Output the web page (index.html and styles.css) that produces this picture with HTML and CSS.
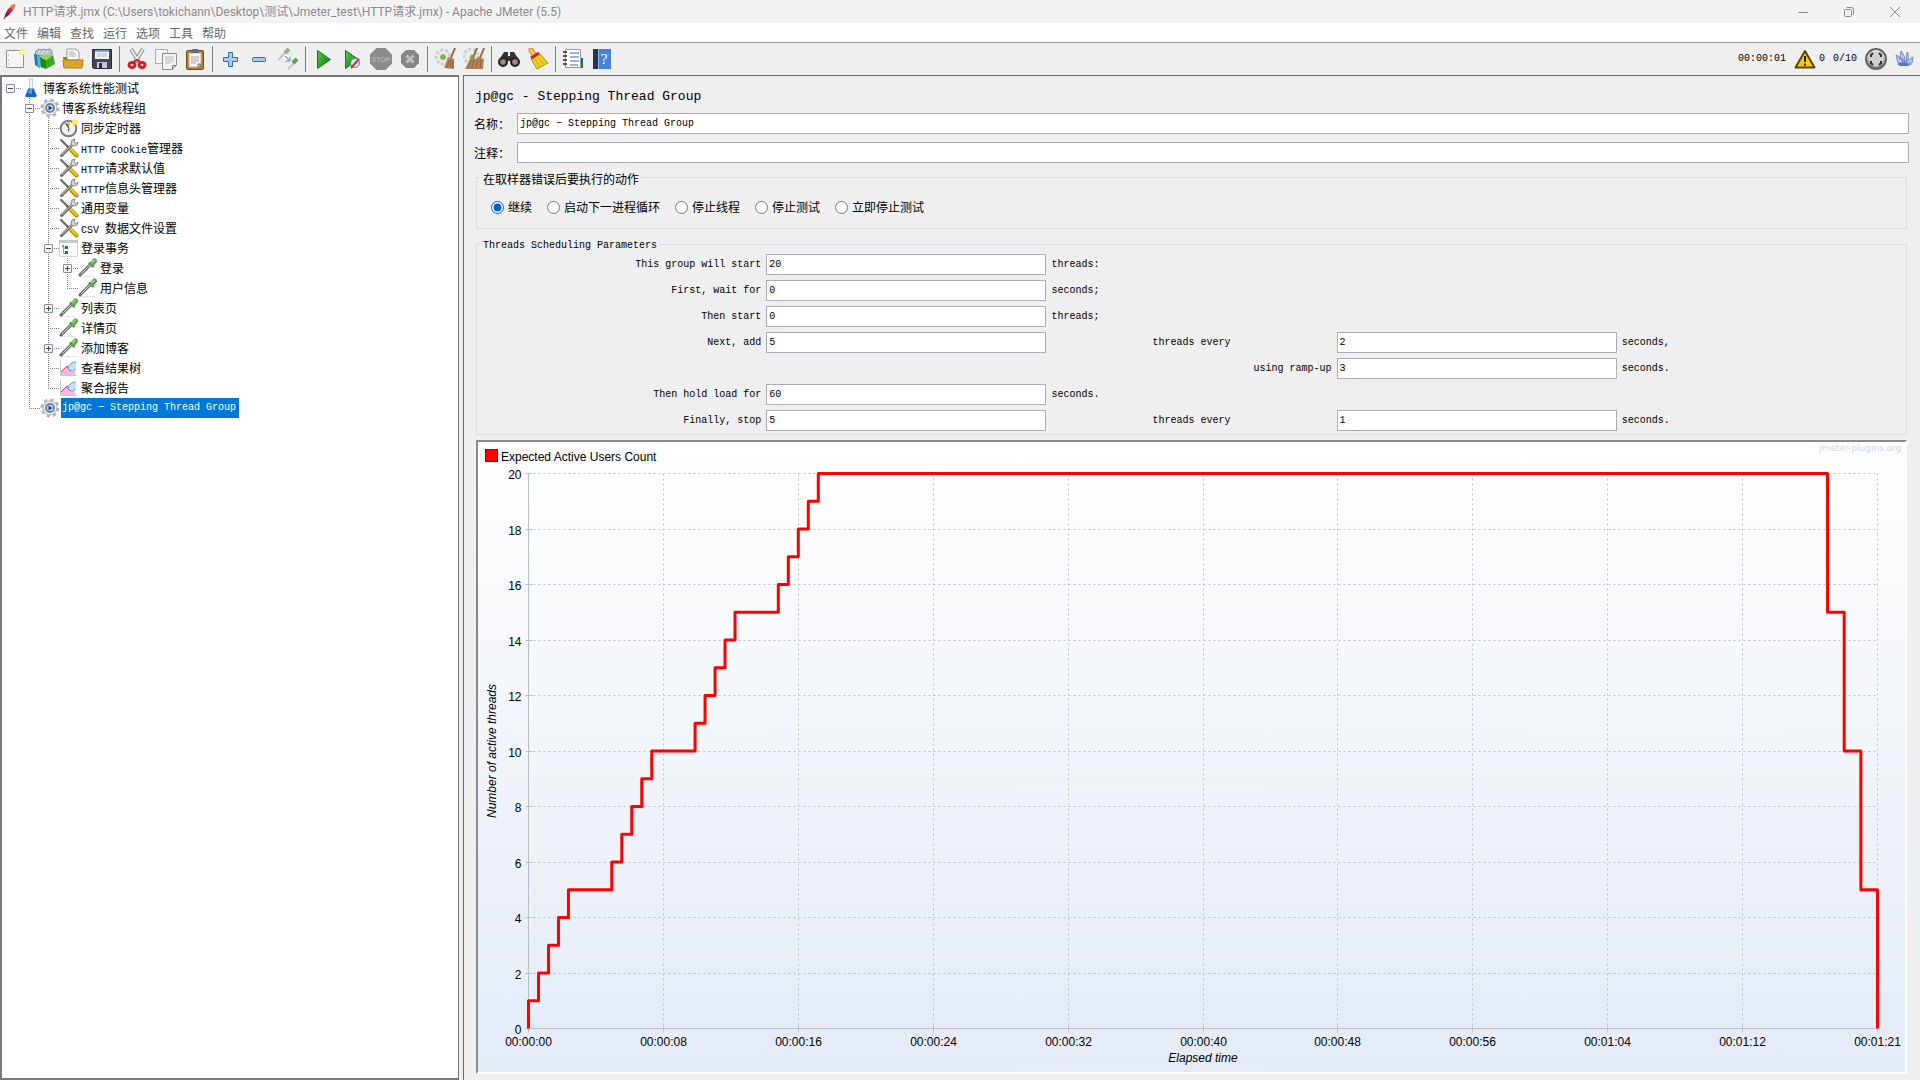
FILE: index.html
```
<!DOCTYPE html>
<html lang="zh-CN">
<head>
    <meta charset="UTF-8">
    <meta name="viewport" content="width=device-width, initial-scale=1.0">
    <title>HTTP请求.jmx - Apache JMeter (5.5)</title>
    <link rel="stylesheet" href="styles.css">
</head>
<body>
    <!-- Shared tree icons -->
    <svg class="defs" width="0" height="0" aria-hidden="true">
        <defs>
            <linearGradient id="greenGrad" x1="0" y1="0" x2="1" y2="1">
                <stop offset="0" stop-color="#5ccb4c"/><stop offset="1" stop-color="#067a06"/>
            </linearGradient>
            <linearGradient id="metalGrad" x1="0" y1="0" x2="0" y2="1">
                <stop offset="0" stop-color="#f4f4f4"/><stop offset="1" stop-color="#777"/>
            </linearGradient>
        </defs>
        <symbol id="icon-flask" viewBox="0 0 20 20">
            <path d="M7.500 1h5M8.500 1v7L4.500 17.500q0 1.500 1.500 1.500h8q1.500 0 1.500-1.500L11.500 8V1" fill="#eef3f8" stroke="#c4cdd6"/>
            <path d="M7.500 10.500h5l3 7q0 1.500-1.500 1.500H6q-1.500 0-1.500-1.500z" fill="#1466c8"/>
            <path d="M7 15l2-4h2v5z" fill="#58a4ee"/>
        </symbol>
        <symbol id="icon-gear" viewBox="0 0 20 20">
            <circle cx="10" cy="10" r="8" fill="none" stroke="#b4b4b4" stroke-width="3" stroke-dasharray="3.300 2.980"/>
            <circle cx="10" cy="10" r="7" fill="#ececec" stroke="#b0b0b0"/>
            <circle cx="10" cy="10" r="4" fill="#cfdcf0" stroke="#6d83ab" stroke-width="2"/>
            <path d="M8.500 7.500l4 2.500-4 2.500z" fill="#1d3f7c"/>
        </symbol>
        <symbol id="icon-timer" viewBox="0 0 20 20">
            <circle cx="9.500" cy="10.500" r="7.800" fill="#f1f1ec" stroke="#77789c" stroke-width="2"/>
            <path d="M9.500 10.500L5 5l6-.5z" fill="#d9a520"/>
            <path d="M7.500 6l2.500 4.500-.5 3" fill="none" stroke="#333"/>
            <circle cx="16" cy="4" r="3" fill="#f6ec3c"/><circle cx="16" cy="4" r="1" fill="#fff"/>
        </symbol>
        <symbol id="icon-tools" viewBox="0 0 20 20">
            <path d="M1.500 1.500l9 9" stroke="#444" stroke-width="2"/>
            <path d="M1.500 2l6 6" stroke="#aaa"/>
            <path d="M2.500 17.500L13 7" stroke="#666" stroke-width="3" stroke-linecap="round"/>
            <path d="M2.500 17L13 6.500" stroke="#e0e0e0"/>
            <path d="M12 6l1-4 3-1-1 3 1.500 1.500L19 4l-1 3-4 1z" fill="#d8d8d8" stroke="#888"/>
            <path d="M12 12l5.500 5.500" stroke="#b98a08" stroke-width="4" stroke-linecap="round"/>
            <path d="M12 11.500l5.500 5.500" stroke="#f6c61a" stroke-width="2" stroke-linecap="round"/>
        </symbol>
        <symbol id="icon-controller" viewBox="0 0 20 20">
            <path d="M.5 2.500h18v16H.5z" fill="#fcfcfc" stroke="#d4d4d4"/>
            <path d="M0 2h19v3H0z" fill="#c4c8cd"/>
            <path d="M4.500 8v7.500h3M4.500 10h3" fill="none" stroke="#8aa9d4"/>
            <path d="M6 8h3v3H6zM6 13h3v3H6z" fill="#1e65c0"/><path d="M3 7h2v2H3z" fill="#5f94d8"/>
        </symbol>
        <symbol id="icon-dropper" viewBox="0 0 20 20">
            <path d="M2 18.500h15" stroke="#e4e4e4"/>
            <path d="M2 17L12.500 6.500" stroke="#666" stroke-width="3" stroke-linecap="round"/>
            <path d="M3 16L12.500 6.500" stroke="#dcdcdc" stroke-width="1"/>
            <path d="M11 4.500l4.500 4.500" stroke="#357a24" stroke-width="2"/>
            <path d="M14 6l2.500-3" stroke="#5aa845" stroke-width="5" stroke-linecap="round"/>
            <path d="M14 4.500l2-2" stroke="#92cd7e" stroke-width="2" stroke-linecap="round"/>
        </symbol>
        <symbol id="icon-results" viewBox="0 0 20 20">
            <path d="M2 17v-4l6-5 4 6 4-2v5z" fill="#f9b8e0"/>
            <path d="M2 14l6-6 3 5 5-3" fill="none" stroke="#d2417c"/>
            <path d="M9 10q1-6 8-6v9h-4z" fill="#c5e0fb"/>
            <path d="M9 11q1-7 8-7M11 12q2 3 5-1" fill="none" stroke="#6697d3"/>
            <path d="M1.500 2v15.500H18" fill="none" stroke="#c9c9c9"/>
        </symbol>
    </svg>

    <header class="titlebar">
        <svg class="title-icon" width="14" height="18" viewBox="0 0 14 18">
            <path d="M3 13Q5 5 12 1q2 1-1 6-3 5-7 7z" fill="#cb2138"/>
            <path d="M8 4q3-3 5-3 0 3-3 6z" fill="#ee7a24"/>
            <path d="M3 13q1-4 3-6l2 4q-2 2-4 3z" fill="#7a2374"/>
            <path d="M2 16l2-4" stroke="#333"/>
        </svg>
        <h1 class="title-text">HTTP请求.jmx (C:\Users\tokichann\Desktop\测试\Jmeter_test\HTTP请求.jmx) - Apache JMeter (5.5)</h1>
        <div class="window-buttons">
            <button aria-label="Minimize"><svg width="10" height="10" viewBox="0 0 10 10"><path d="M0 5.500h10"/></svg></button>
            <button aria-label="Restore"><svg width="10" height="10" viewBox="0 0 10 10"><rect x=".5" y="2.500" width="7" height="7" rx="1"/><path d="M2.500.5h5q2 0 2 2v5"/></svg></button>
            <button aria-label="Close"><svg width="10" height="10" viewBox="0 0 10 10"><path d="M0 0l10 10M10 0L0 10"/></svg></button>
        </div>
    </header>

    <nav class="menubar">
        <button>文件</button>
        <button>编辑</button>
        <button>查找</button>
        <button>运行</button>
        <button>选项</button>
        <button>工具</button>
        <button>帮助</button>
    </nav>

    <div class="toolbar">
        <button class="tool" aria-label="New">
            <svg viewBox="0 0 22 22"><path d="M2.500 2.500h17v17h-17z" fill="#f6f6f6" stroke="#8f8f8f"/><path d="M4 7h1M4 12h1M4 16h1" stroke="#999"/><circle cx="18" cy="4" r="3" fill="#f7ee7a"/><circle cx="18" cy="4" r="1" fill="#fff"/></svg>
        </button>
        <button class="tool" aria-label="Templates">
            <svg viewBox="0 0 22 22"><path d="M2 7q0-5 4-6l2 1 3-1 2 1 4-1 2 2v6z" fill="#b9c4c9" stroke="#87949a"/><path d="M5 6l2-4M9 6l2-4M13 6l2-4" stroke="#e8eef0"/><path d="M1 6l6 2v12l-5-3z" fill="#1d7db8"/><path d="M4 7l5 2v11l-4-2z" fill="#45bbe6"/><path d="M7 9l6 3v9l-5-2z" fill="#23850f"/><path d="M13 12l7-5 2 9-9 5z" fill="#37a91f"/><path d="M7 9l6-3 7 1-7 5z" fill="#8cd866"/></svg>
        </button>
        <button class="tool" aria-label="Open">
            <svg viewBox="0 0 22 22"><path d="M5 12V1h9l3 3v8z" fill="#fafafa" stroke="#999"/><path d="M7 4h5M7 6h7M7 8h7" stroke="#aaa"/><path d="M1 9h4v3h12l3 1v7H2z" fill="#b87908"/><path d="M1 12h20l-1 8H2z" fill="#dfa42c" stroke="#b47c0b"/></svg>
        </button>
        <button class="tool" aria-label="Save">
            <svg viewBox="0 0 22 22"><path d="M1.500 1.500h19v19h-18l-1-1z" fill="#44485a" stroke="#292b36"/><path d="M4 2h14v9H4z" fill="#eef2f8"/><path d="M4 2h14v2H4z" fill="#7ba0d6"/><path d="M6 6h10M6 8h10" stroke="#b4bac2"/><path d="M6 14h10v6H6z" fill="#c3c7cf"/><path d="M8 15h3v5H8z" fill="#30323e"/></svg>
        </button>
        <span class="separator"></span>
        <button class="tool" aria-label="Cut">
            <svg viewBox="0 0 22 22"><path d="M5 1l8 13M17 1L9 14" stroke="#888" stroke-width="4"/><path d="M5 1l8 13M17 1L9 14" stroke="#eee" stroke-width="2"/><ellipse cx="6" cy="17" rx="3" ry="2.500" fill="none" stroke="#d51f27" stroke-width="3"/><ellipse cx="16" cy="17" rx="3" ry="2.500" fill="none" stroke="#d51f27" stroke-width="3"/><path d="M8 14l3-2 3 2" fill="none" stroke="#d51f27" stroke-width="2"/></svg>
        </button>
        <button class="tool" aria-label="Copy">
            <svg viewBox="0 0 22 22"><path d="M.5 1.500h12v14H.5z" fill="#f4f4f4" stroke="#aaa"/><path d="M7.500 5.500h14v12l-4 4h-10z" fill="#f3f3f1" stroke="#8c8c8c"/><path d="M10 9h9M10 11h9M10 13h9M10 15h6" stroke="#bbb"/><path d="M17.500 21v-3.500H21" fill="#ddd" stroke="#777"/></svg>
        </button>
        <button class="tool" aria-label="Paste">
            <svg viewBox="0 0 22 22"><rect x="2.500" y="2.500" width="17" height="19" rx="1" fill="#b57a25" stroke="#7b4b0d"/><path d="M5 5h12v11l-3 3H5z" fill="#f6f6f4" stroke="#c4b69f"/><path d="M7 9h8M7 11h8M7 13h8M7 15h5" stroke="#aaa"/><path d="M7 5V2l2-1h4l2 1v3z" fill="#666c70"/><path d="M14 19v-3h3" fill="#ccc" stroke="#777"/></svg>
        </button>
        <span class="separator"></span>
        <button class="tool" aria-label="Expand all">
            <svg viewBox="0 0 22 22"><path d="M9.500 4.500h4v5h5v4h-5v5h-4v-5h-5v-4h5z" fill="#a9c9ee" stroke="#346db2"/></svg>
        </button>
        <button class="tool" aria-label="Collapse all">
            <svg viewBox="0 0 22 22"><rect x="4.500" y="9.500" width="13" height="4" rx="1" fill="#a9c9ee" stroke="#346db2"/></svg>
        </button>
        <button class="tool" aria-label="Toggle">
            <svg viewBox="0 0 22 22"><path d="M1 12l8-8" stroke="#c4c4c4" stroke-width="2"/><path d="M8 5l4-4" stroke="#84b873" stroke-width="4"/><path d="M3 14h9" stroke="#ddd"/><path d="M11 21l6-6" stroke="#c4c4c4" stroke-width="2"/><path d="M16 15l4-4" stroke="#5fa24c" stroke-width="4"/><path d="M8 8l4 4M13 9v4H9" fill="none" stroke="#4a8be0"/></svg>
        </button>
        <span class="separator"></span>
        <button class="tool" aria-label="Start">
            <svg viewBox="0 0 22 22"><path d="M5.500 2.500l13 9-13 9z" fill="url(#greenGrad)" stroke="#07820a"/></svg>
        </button>
        <button class="tool" aria-label="Start no pauses">
            <svg viewBox="0 0 22 22"><path d="M4.500 2.500l13 9-13 9z" fill="url(#greenGrad)" stroke="#07820a"/><circle cx="14" cy="15" r="4.500" fill="#d9e7f7" stroke="#4c7ebf"/><path d="M10 20l8-9" stroke="#d12c2c" stroke-width="2"/></svg>
        </button>
        <button class="tool" aria-label="Stop" disabled>
            <svg viewBox="0 0 22 22"><path d="M6.500 0h9L22 6.500v9L15.500 22h-9L0 15.500v-9z" fill="#8b8b8b"/><text x="11" y="14" class="stop-text">STOP</text></svg>
        </button>
        <button class="tool" aria-label="Shutdown" disabled>
            <svg viewBox="0 0 22 22"><path d="M7 2h8l5 5v8l-5 5H7l-5-5V7z" fill="#868686"/><path d="M7.500 7.500l7 7M14.500 7.500l-7 7" stroke="#bdbdbd" stroke-width="3"/></svg>
        </button>
        <span class="separator"></span>
        <button class="tool" aria-label="Clear">
            <svg viewBox="0 0 22 22"><circle cx="9" cy="9" r="7" fill="#ebebeb" stroke="#cdcdcd" stroke-width="3" stroke-dasharray="3 2"/><circle cx="9" cy="9" r="2.500" fill="#79c52f" stroke="#8aa06c"/><path d="M21 0l-4 10" stroke="#9a6b3e" stroke-width="2"/><path d="M14 9l6 2v10l-10-1z" fill="#b18455"/><path d="M15 12l-2 8M17 12l-1 8M19 12v8" stroke="#8f6339"/></svg>
        </button>
        <button class="tool" aria-label="Clear all">
            <svg viewBox="0 0 22 22"><circle cx="8" cy="8" r="7" fill="#ebebeb" stroke="#cdcdcd" stroke-width="3" stroke-dasharray="3 2"/><circle cx="9" cy="9" r="2.500" fill="#79c52f"/><path d="M14 0l-4 10M21 0l-4 10" stroke="#9a6b3e" stroke-width="2"/><path d="M8 9l5 2 2-2 6 2-1 10H2z" fill="#b18455"/><path d="M8 12l-3 8M11 12l-2 8M15 12l-2 8M18 12l-1 8" stroke="#8f6339"/></svg>
        </button>
        <span class="separator"></span>
        <button class="tool" aria-label="Search">
            <svg viewBox="0 0 22 22"><path d="M6 4h4v4h2V4h4l5 8v5h-8v-4H9v4H1v-5z" fill="#353535"/><circle cx="5" cy="14" r="4" fill="#777" stroke="#222" stroke-width="2"/><circle cx="17" cy="14" r="4" fill="#777" stroke="#222" stroke-width="2"/><circle cx="5" cy="14" r="2" fill="#c98159"/><circle cx="17" cy="14" r="2" fill="#c98159"/></svg>
        </button>
        <button class="tool" aria-label="Reset search">
            <svg viewBox="0 0 22 22"><path d="M4 2l4 6" stroke="#c38b15" stroke-width="5" stroke-linecap="round"/><path d="M4 2l4 6" stroke="#f3ce62" stroke-width="3" stroke-linecap="round"/><path d="M4 11l9-5 8 9-11 6z" fill="#f0cf24" stroke="#b48f0b"/><path d="M4 10l8-5" stroke="#cf2424" stroke-width="3"/><path d="M8 11l5 8M11 9l7 8" stroke="#c9a414"/></svg>
        </button>
        <span class="separator"></span>
        <button class="tool" aria-label="Function helper">
            <svg viewBox="0 0 22 22"><path d="M16 12h5v8h-5z" fill="#11823c"/><path d="M18 10h3v4h-3z" fill="#1a59c7"/><path d="M3.500 1.500h15v18h-15z" fill="#fff" stroke="#999"/><path d="M8 5h9M8 9h9M8 13h9M8 17h8" stroke="#1d6ddb"/><path d="M1 4h4M1 8h4M1 12h4M1 16h4" stroke="#555" stroke-width="2"/></svg>
        </button>
        <button class="tool" aria-label="Help">
            <svg viewBox="0 0 22 22"><path d="M2 1h18v20H2z" fill="#4684d8"/><path d="M2 1h5v20H2z" fill="#24364f"/><path d="M7.500 1v20" stroke="#8ab4ea"/><text x="13" y="16" class="help-text">?</text></svg>
        </button>

        <div class="status">
            <span class="elapsed">00:00:01</span>
            <svg width="22" height="20" viewBox="0 0 22 20"><path d="M11 2l9.500 16.500h-19z" fill="#f7cb0a" stroke="#5a4503" stroke-width="2" stroke-linejoin="round"/><path d="M11 7v6M11 14.500v2" stroke="#2e2504" stroke-width="2"/></svg>
            <span class="errors">0</span>
            <span class="active">0/10</span>
            <svg width="22" height="22" viewBox="0 0 22 22"><circle cx="11" cy="11" r="10" fill="url(#metalGrad)" stroke="#666" stroke-width="2"/><circle cx="11" cy="11" r="7.500" fill="#cfcfcf"/><path d="M6 9V7l2-2M16 9V7l-2-2M6 13v2l2 2M16 13v2l-2 2" fill="none" stroke="#333" stroke-width="2"/></svg>
            <svg width="20" height="18" viewBox="0 0 20 18"><path d="M1 5q4 1 8 9L3 13zM6 1q5 5 4 12L5 7zM12 2q3 5-1 11zM18 8q-5 0-8 6l7-1z" fill="#a9c6ee" stroke="#6c8fd0"/><path d="M2 14q5-3 8-1t8 1l-5 2H5z" fill="#5479c4"/><path d="M4 8q5 1 8 6" fill="none" stroke="#cc4a62"/><path d="M12 2l2 2M16 7h3" stroke="#e79a4c"/></svg>
        </div>
    </div>

    <div class="workspace">
        <aside class="tree-panel">
            <ul class="tree">
                <li>
                    <div class="node"><span class="branch"><button class="toggle" aria-label="Collapse"></button></span><svg class="node-icon"><use href="#icon-flask"/></svg><span class="name">博客系统性能测试</span></div>
                    <ul>
                        <li>
                            <div class="node"><span class="branch"><button class="toggle" aria-label="Collapse"></button></span><svg class="node-icon"><use href="#icon-gear"/></svg><span class="name">博客系统线程组</span></div>
                            <ul>
                                <li><div class="node"><span class="branch"></span><svg class="node-icon"><use href="#icon-timer"/></svg><span class="name">同步定时器</span></div></li>
                                <li><div class="node"><span class="branch"></span><svg class="node-icon"><use href="#icon-tools"/></svg><span class="name"><span class="mono">HTTP Cookie</span>管理器</span></div></li>
                                <li><div class="node"><span class="branch"></span><svg class="node-icon"><use href="#icon-tools"/></svg><span class="name"><span class="mono">HTTP</span>请求默认值</span></div></li>
                                <li><div class="node"><span class="branch"></span><svg class="node-icon"><use href="#icon-tools"/></svg><span class="name"><span class="mono">HTTP</span>信息头管理器</span></div></li>
                                <li><div class="node"><span class="branch"></span><svg class="node-icon"><use href="#icon-tools"/></svg><span class="name">通用变量</span></div></li>
                                <li><div class="node"><span class="branch"></span><svg class="node-icon"><use href="#icon-tools"/></svg><span class="name"><span class="mono">CSV </span>数据文件设置</span></div></li>
                                <li>
                                    <div class="node"><span class="branch"><button class="toggle" aria-label="Collapse"></button></span><svg class="node-icon"><use href="#icon-controller"/></svg><span class="name">登录事务</span></div>
                                    <ul>
                                        <li><div class="node"><span class="branch"><button class="toggle plus" aria-label="Expand"></button></span><svg class="node-icon"><use href="#icon-dropper"/></svg><span class="name">登录</span></div></li>
                                        <li><div class="node"><span class="branch"></span><svg class="node-icon"><use href="#icon-dropper"/></svg><span class="name">用户信息</span></div></li>
                                    </ul>
                                </li>
                                <li><div class="node"><span class="branch"><button class="toggle plus" aria-label="Expand"></button></span><svg class="node-icon"><use href="#icon-dropper"/></svg><span class="name">列表页</span></div></li>
                                <li><div class="node"><span class="branch"></span><svg class="node-icon"><use href="#icon-dropper"/></svg><span class="name">详情页</span></div></li>
                                <li><div class="node"><span class="branch"><button class="toggle plus" aria-label="Expand"></button></span><svg class="node-icon"><use href="#icon-dropper"/></svg><span class="name">添加博客</span></div></li>
                                <li><div class="node"><span class="branch"></span><svg class="node-icon"><use href="#icon-results"/></svg><span class="name">查看结果树</span></div></li>
                                <li><div class="node"><span class="branch"></span><svg class="node-icon"><use href="#icon-results"/></svg><span class="name">聚合报告</span></div></li>
                            </ul>
                        </li>
                        <li><div class="node selected"><span class="branch"></span><svg class="node-icon"><use href="#icon-gear"/></svg><span class="name mono">jp@gc − Stepping Thread Group</span></div></li>
                    </ul>
                </li>
            </ul>
        </aside>

        <main class="editor">
            <h2 class="editor-title">jp@gc - Stepping Thread Group</h2>
            <div class="field-row">
                <label for="name">名称：</label>
                <input type="text" id="name" value="jp@gc − Stepping Thread Group">
            </div>
            <div class="field-row comment">
                <label for="comment">注释：</label>
                <input type="text" id="comment">
            </div>

            <fieldset class="group">
                <legend>在取样器错误后要执行的动作</legend>
                <div class="radios">
                    <label><input type="radio" name="on-error" checked>继续</label>
                    <label><input type="radio" name="on-error">启动下一进程循环</label>
                    <label><input type="radio" name="on-error">停止线程</label>
                    <label><input type="radio" name="on-error">停止测试</label>
                    <label><input type="radio" name="on-error">立即停止测试</label>
                </div>
            </fieldset>

            <fieldset class="group schedule">
                <legend class="mono">Threads Scheduling Parameters</legend>
                <div class="params mono">
                    <label class="before" for="start-threads">This group will start</label>
                    <input type="text" id="start-threads" value="20">
                    <span class="unit">threads:</span>

                    <label class="before" for="first-wait">First, wait for</label>
                    <input type="text" id="first-wait" value="0">
                    <span class="unit">seconds;</span>

                    <label class="before" for="then-start">Then start</label>
                    <input type="text" id="then-start" value="0">
                    <span class="unit">threads;</span>

                    <label class="before" for="next-add">Next, add</label>
                    <input type="text" id="next-add" value="5">
                    <label class="middle" for="add-every">threads every</label>
                    <input type="text" id="add-every" value="2">
                    <span>seconds,</span>

                    <label class="before ramp" for="ramp-up">using ramp-up</label>
                    <input type="text" id="ramp-up" value="3">
                    <span>seconds.</span>

                    <label class="before" for="hold-load">Then hold load for</label>
                    <input type="text" id="hold-load" value="60">
                    <span class="unit">seconds.</span>

                    <label class="before" for="stop-threads">Finally, stop</label>
                    <input type="text" id="stop-threads" value="5">
                    <label class="middle" for="stop-every">threads every</label>
                    <input type="text" id="stop-every" value="1">
                    <span>seconds.</span>
                </div>
            </fieldset>

            <div class="chart">
                <svg id="chart" role="img" aria-label="Expected Active Users Count"></svg>
            </div>
        </main>
    </div>

    <script src="chart.js"></script>
</body>
</html>
```
FILE: styles.css
```
* {
    box-sizing: border-box;
}

body {
    display: flex;
    flex-direction: column;
    height: 100vh;
    margin: 0;
    background-color: #efefef;
    color: #000;
    font-family: 'Noto Sans CJK SC', sans-serif;
    font-size: 12px;
    line-height: 20px;
}

button {
    padding: 0;
    border: none;
    background: none;
    color: inherit;
    font: inherit;
}

.defs {
    position: absolute;
}

.mono {
    font-family: 'Liberation Mono', 'Noto Sans CJK SC', monospace;
    font-size: 10px;
}

/* Title bar and menu */
.titlebar {
    display: flex;
    align-items: center;
    height: 23px;
    padding: 0 2px;
    background-color: #f3f3f3;
    color: #8a8a8a;
}

.title-text {
    flex: 1;
    margin: 0 0 0 7px;
    font-family: Roboto, 'Noto Sans CJK SC', sans-serif;
    font-size: 12px;
    font-weight: normal;
    white-space: nowrap;
}

.window-buttons {
    display: flex;
}

.window-buttons button {
    display: flex;
    align-items: center;
    justify-content: center;
    width: 46px;
    height: 20px;
}

.window-buttons svg {
    fill: none;
    stroke: #8a8a8a;
}

.menubar {
    display: flex;
    gap: 9px;
    height: 20px;
    padding-left: 4px;
    border-bottom: 1px solid #9a9a9a;
    background-color: #fff;
    color: #666;
}

/* Toolbar */
.toolbar {
    display: flex;
    align-items: center;
    height: 32px;
}

.tool {
    display: flex;
    justify-content: center;
    width: 29px;
}

.tool svg {
    width: 22px;
    height: 22px;
    fill: none;
}

.separator {
    width: 6px;
    height: 26px;
    border-left: 1px solid #808080;
    margin-left: 3px;
    margin-right: -3px;
}

.stop-text {
    fill: #b4b4b4;
    font: bold 7px 'Liberation Sans', sans-serif;
    text-anchor: middle;
}

.help-text {
    fill: #fff;
    font: 15px 'Liberation Serif', serif;
    text-anchor: middle;
}

.status {
    display: flex;
    align-items: center;
    gap: 8px;
    margin-left: auto;
    padding-right: 5px;
    font-family: 'Liberation Mono', monospace;
    font-size: 10px;
}

.errors {
    margin-left: -5px;
}

/* Main split */
.workspace {
    display: flex;
    flex: 1;
    gap: 4px;
    min-height: 0;
}

.tree-panel {
    width: 24%;
    max-width: 459px;
    padding-top: 1px;
    border: 2px solid #77777c;
    border-right-width: 1px;
    background-color: #fff;
    overflow: auto;
}

.tree, .tree ul {
    margin: 0;
    padding: 0;
    list-style: none;
}

.tree ul {
    padding-left: 19px;
}

/* dotted guide running down the left of each nested item */
.tree ul > li {
    background: repeating-linear-gradient(to bottom, #808080 0 1px, transparent 1px 2px) 8px 0 / 1px 100% no-repeat;
}

.tree ul > li:last-child {
    background-size: 1px 10px;
}

.node {
    display: flex;
    align-items: center;
    height: 20px;
    white-space: nowrap;
}

.branch {
    display: flex;
    align-items: center;
    width: 19px;
    height: 20px;
    padding-left: 4px;
    background: repeating-linear-gradient(to right, #808080 0 1px, transparent 1px 2px) 8px 10px / 11px 1px no-repeat;
}

.toggle {
    width: 9px;
    height: 9px;
    border: 1px solid #8c8c8c;
    border-radius: 1px;
    background: linear-gradient(#2f4f92, #2f4f92) center / 5px 1px no-repeat #f6f6f6;
}

.toggle.plus {
    background-image: linear-gradient(#2f4f92, #2f4f92), linear-gradient(#2f4f92, #2f4f92);
    background-size: 5px 1px, 1px 5px;
}

.node-icon {
    width: 20px;
    height: 20px;
    fill: none;
}

.name {
    margin-left: 1px;
    padding: 0 3px 0 1px;
    height: 20px;
}

.selected .name {
    background-color: #0078d7;
    color: #fff;
}

/* Editor */
.editor {
    display: flex;
    flex: 1;
    flex-direction: column;
    min-width: 0;
    padding: 11px 11px 6px 10px;
    border-top: 1px solid #6e6e6e;
    border-left: 1px solid #6e6e6e;
}

.editor-title {
    margin: 0 0 6px 1px;
    font-family: 'Liberation Mono', monospace;
    font-size: 13px;
    font-weight: normal;
}

.field-row {
    display: flex;
    align-items: center;
    margin-bottom: 8px;
}

.field-row label {
    width: 43px;
}

.comment {
    margin-bottom: 5px;
}

.comment input {
    height: 26px;
}

input[type="text"] {
    flex: 1;
    min-width: 0;
    height: 21px;
    margin: 0;
    padding: 0 2px;
    border: 1px solid #abadb3;
    background-color: #fff;
    font-family: 'Liberation Mono', monospace;
    font-size: 10px;
}

.group {
    margin: 0 2px 6px 2px;
    padding: 0;
    border: 1px solid #dcdcdc;
}

.schedule {
    margin-bottom: 5px;
}

.group legend {
    margin-left: 4px;
    padding: 4px 2px 0;
    line-height: 14px;
}

.radios {
    display: flex;
    gap: 15px;
    padding: 11px 14px;
}

.radios label {
    display: flex;
    align-items: center;
    gap: 4px;
}

.radios input {
    width: 13px;
    height: 13px;
    margin: 0;
    accent-color: #005fb8;
}

.params {
    display: grid;
    grid-template-columns: repeat(5, 1fr);
    gap: 5px;
    align-items: center;
    padding: 1px 4px 3px;
}

.before {
    text-align: right;
}

.middle {
    text-align: center;
}

.unit {
    grid-column: 3 / -1;
}

.ramp {
    grid-column: 3;
}

/* Chart */
.chart {
    display: flex;
    flex: 1;
    min-height: 200px;
    margin: 0 2px;
    border: 2px solid #fff;
    border-top-color: #8a8a8a;
    border-left-color: #8a8a8a;
    background-image: linear-gradient(#fff, #e4ebf5);
}

#chart {
    flex: 1;
    min-width: 0;
    font-family: 'Liberation Sans', sans-serif;
    font-size: 12px;
}

.grid-line, .axis {
    fill: none;
    stroke: #bac1cd;
}

.grid-line {
    stroke-dasharray: 2 3;
}

.series {
    fill: none;
    stroke: #f00;
    stroke-width: 3;
    stroke-linejoin: round;
}

.legend-mark {
    fill: #f00;
    stroke: #b00000;
}

.middle-text {
    text-anchor: middle;
}

.end-text {
    text-anchor: end;
}

.axis-title {
    font-style: italic;
    text-anchor: middle;
}

.watermark {
    fill: #ced3dc;
    font-family: 'DejaVu Sans', sans-serif;
    font-size: 9px;
    text-anchor: end;
}
```
FILE: chart.js
```
const svg = document.getElementById('chart');

const DURATION = 81;
const MAX_USERS = 20;
const margin = { top: 31, right: 28, bottom: 44, left: 50 };

// each group of five threads ramps up over 3 seconds, 5 seconds apart
function buildPoints() {
    const points = [[0, 0]];
    let users = 0;
    for (let group = 0; group < 4; group++) {
        for (let i = 0; i < 5; i++) {
            const t = group * 5 + i * 0.6;
            points.push([t, users]);
            users++;
            points.push([t, users]);
        }
    }
    for (let t = 78; t <= DURATION; t++) {
        points.push([t, users]);
        users -= 5;
        points.push([t, users]);
    }
    return points;
}

function add(tag, attrs, text) {
    const el = document.createElementNS('http://www.w3.org/2000/svg', tag);
    for (const key in attrs) {
        el.setAttribute(key, attrs[key]);
    }
    if (text) {
        el.textContent = text;
    }
    svg.appendChild(el);
}

function formatTime(seconds) {
    const m = Math.floor(seconds / 60);
    const s = Math.floor(seconds % 60);
    return '00:' + String(m).padStart(2, '0') + ':' + String(s).padStart(2, '0');
}

function draw() {
    const box = svg.getBoundingClientRect();
    const left = margin.left + 0.5;
    const top = margin.top + 0.5;
    const right = Math.round(box.width) - margin.right + 0.5;
    const bottom = Math.round(box.height) - margin.bottom + 0.5;
    const x = t => left + (right - left) * t / DURATION;
    const y = v => bottom - (bottom - top) * v / MAX_USERS;
    const snap = n => Math.floor(n) + 0.5;

    svg.innerHTML = '';

    for (let v = 0; v <= MAX_USERS; v += 2) {
        const yy = snap(y(v));
        if (v > 0) {
            add('path', { class: 'grid-line', d: `M${left} ${yy}H${right}` });
        }
        add('path', { class: 'axis', d: `M${left - 3} ${yy}h7` });
        add('text', { class: 'end-text', x: left - 7, y: yy + 5 }, String(v));
    }
    for (let i = 0; i <= 10; i++) {
        const t = DURATION * i / 10;
        const xx = snap(x(t));
        if (i > 0) {
            add('path', { class: 'grid-line', d: `M${xx} ${top}V${bottom}` });
        }
        add('path', { class: 'axis', d: `M${xx} ${bottom - 3}v7` });
        add('text', { class: 'middle-text', x: xx, y: bottom + 17 }, formatTime(t));
    }
    add('path', { class: 'axis', d: `M${left} ${top}V${bottom}H${right}` });

    const line = buildPoints().map(p => `${x(p[0])},${y(p[1])}`).join(' ');
    add('polyline', { class: 'series', points: line });

    add('rect', { class: 'legend-mark', x: 7.5, y: 7.5, width: 12, height: 12 });
    add('text', { x: 23, y: 19 }, 'Expected Active Users Count');
    add('text', { class: 'watermark', x: right + 24, y: 9 }, 'jmeter-plugins.org');
    add('text', { class: 'axis-title', x: (left + right) / 2, y: bottom + 33 }, 'Elapsed time');

    const midY = (top + bottom) / 2;
    add('text', { class: 'axis-title', x: 18, y: midY, transform: `rotate(-90 18 ${midY})` }, 'Number of active threads');
}

draw();
window.addEventListener('resize', draw);
```
